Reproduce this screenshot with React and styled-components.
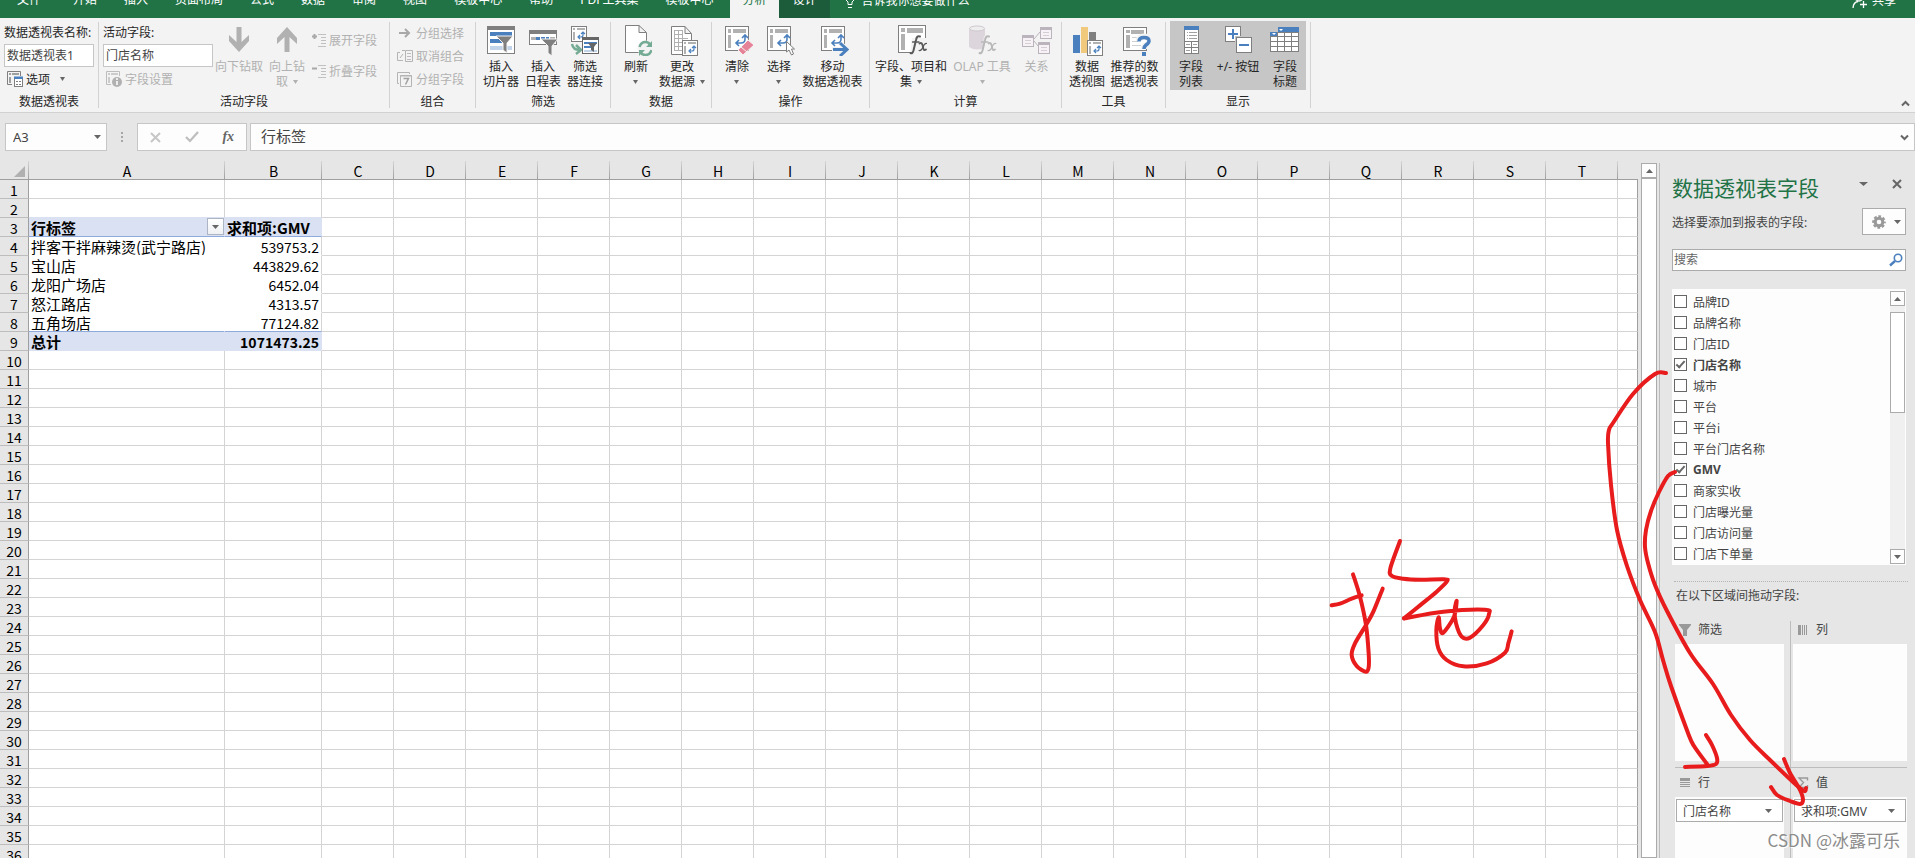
import React from "react";
import styled, { createGlobalStyle, css } from "styled-components";

const GREEN = "#217346";
const GREY = "#7f7f7f";
const BLUE = "#4a80bd";
const UI = `"Noto Sans", "Noto Sans CJK SC", sans-serif`;
const CELL = `"Noto Sans CJK SC", "Noto Sans", sans-serif`;

const Global = createGlobalStyle`
  *, *::before, *::after { box-sizing: border-box; }
  body { margin: 0; font-family: ${UI}; font-size: 12px; color: #262626; background: #e6e6e6; }
  button, input { font: inherit; color: inherit; margin: 0; border-radius: 0; }
  button { background: none; border: 0; padding: 0; }
  svg { display: block; flex: none; }
`;

const Page = styled.div`
  position: relative;
  display: flex;
  flex-direction: column;
  height: 100vh;
  overflow: hidden;
`;

/* ---------- tab strip ---------- */

const TabStrip = styled.nav`
  display: flex;
  align-items: flex-end;
  flex: none;
  height: 18px;
  overflow: hidden;
  background: ${GREEN};
  color: #fff;
`;

const Tab = styled.button`
  flex: none;
  height: 36px;
  padding: 0 14px 0 13px;
  line-height: 18px;
  white-space: nowrap;
  ${(p) => p.$kind === "file" && css`padding: 0 19px 0 17px;`}
  ${(p) => p.$kind === "active" && css`margin-left: 3px; padding: 0 13px 0 12px; background: #f3f3f3; color: ${GREEN};`}
  ${(p) => p.$kind === "context" && css`background: #1c5c3b;`}
`;

const TellMe = styled.button`
  display: flex;
  align-items: center;
  gap: 5px;
  height: 36px;
  margin-left: 14px;
  white-space: nowrap;
`;

const Share = styled(TellMe)`
  margin-left: auto;
  margin-right: 19px;
`;

/* ---------- ribbon ---------- */

const Ribbon = styled.div`
  display: flex;
  flex: none;
  height: 95px;
  background: #f3f3f3;
  border-bottom: 1px solid #d2d2d2;
`;

const Group = styled.section`
  display: flex;
  flex-direction: column;
  flex: none;
  padding: 3px 4px 0;
`;

const GroupBody = styled.div`
  display: flex;
  height: 69px;
  background: ${(p) => (p.$pressed ? "#c6c6c6" : "none")};
`;

const GroupTitle = styled.h2`
  margin: 2px 0 0;
  font-size: 12px;
  font-weight: 400;
  line-height: 20px;
  text-align: center;
`;

const Divider = styled.div`
  flex: none;
  width: 1px;
  margin: 4px 0;
  background: #d2d2d2;
`;

const BigButton = styled.button`
  display: flex;
  flex-direction: column;
  align-items: center;
  gap: 3px;
  width: ${(p) => p.$w || 42}px;
  padding: 3px 0 0;
  line-height: 15px;
  white-space: nowrap;
  color: ${(p) => (p.disabled ? "#b1b1b1" : "#262626")};
`;

const Line = styled.span`
  display: flex;
  align-items: center;
  justify-content: center;
  gap: 5px;
  height: 15px;
`;

const Stack = styled.div`
  display: flex;
  flex-direction: column;
  width: ${(p) => p.$w}px;
  padding-top: ${(p) => p.$top || 0}px;
  gap: ${(p) => p.$gap || 0}px;
`;

const FieldLabel = styled.label`
  padding-top: 2px;
  line-height: 18px;
  white-space: nowrap;
`;

const TextBox = styled.input`
  width: 100%;
  height: 23px;
  margin: 2px 0;
  padding: 0 2px;
  border: 1px solid #c6c6c6;
  background: #fff;
  color: #444;
`;

const SmallButton = styled.button`
  display: flex;
  align-items: center;
  gap: 3px;
  height: ${(p) => p.$h || 22}px;
  padding-left: 3px;
  white-space: nowrap;
  color: ${(p) => (p.disabled ? "#b1b1b1" : "#262626")};
`;

const MenuMark = styled.span`
  padding-left: 7px;
`;

const Collapse = styled.button`
  align-self: flex-end;
  margin: 0 5px 5px auto;
`;

/* ---------- formula bar ---------- */

const FormulaBar = styled.div`
  display: flex;
  flex: none;
  height: 48px;
  padding: 10px 0 10px 5px;
`;

const BarBox = styled.div`
  display: flex;
  align-items: center;
  width: ${(p) => (p.$w ? `${p.$w}px` : "auto")};
  flex: ${(p) => (p.$w ? "none" : "1")};
  min-width: 0;
  border: 1px solid #c6c6c6;
  background: #fdfdfd;
  padding: 0 5px;
`;

const BarInput = styled.input`
  flex: 1;
  min-width: 0;
  border: 0;
  background: none;
  padding: ${(p) => (p.$formula ? "0 0 3px 5px" : "0 0 0 2px")};
  font-family: ${(p) => (p.$formula ? CELL : UI)};
  font-size: ${(p) => (p.$formula ? 15 : 13)}px;
  line-height: 20px;
  color: #444;
`;

const Dots = styled.div`
  display: flex;
  flex-direction: column;
  align-items: center;
  justify-content: center;
  gap: 2px;
  width: 30px;
  &::before, &::after, span { content: ""; width: 2px; height: 2px; background: #a6a6a6; }
`;

const BarButtons = styled(BarBox)`
  justify-content: space-around;
  padding: 0;
  margin-right: 3px;
`;

const FxButton = styled.button`
  font: italic bold 14px "Liberation Serif", serif;
  color: #666;
`;

/* ---------- worksheet ---------- */

const Workspace = styled.main`
  display: flex;
  flex: 1;
  min-height: 0;
`;

const SheetArea = styled.div`
  flex: 1;
  min-width: 0;
  overflow: hidden;
`;

const Grid = styled.table`
  width: 100%;
  table-layout: fixed;
  border-collapse: separate;
  border-spacing: 0;
  font-family: ${CELL};
  color: #000;
`;

const ColHead = styled.th`
  height: 19px;
  padding: 3px 0 0;
  border-bottom: 1px solid #9f9f9f;
  background: linear-gradient(#d4d4d4, #9f9f9f) right / 1px 100% no-repeat;
  font-size: 14px;
  font-weight: 400;
  line-height: 15px;
  &:last-child { background: none; }
`;

const Corner = styled(ColHead)`
  svg { margin: 0 4px 0 auto; }
`;

const RowHead = styled.th`
  height: 19px;
  padding: 2px 0 0;
  border-right: 1px solid #9f9f9f;
  border-bottom: 1px solid #bdbdbd;
  background: #e6e6e6;
  font-size: 14px;
  font-weight: 400;
  line-height: 16px;
`;

const Cell = styled.td`
  height: 19px;
  padding: ${(p) => (p.$flush ? 0 : 2)}px 2px 0;
  overflow: hidden;
  background: ${(p) => (p.$fill ? "#d9e1f2" : "#fff")};
  border-right: 1px solid ${(p) => p.$right || "#d4d4d4"};
  border-bottom: 1px solid ${(p) => p.$bottom || "#d4d4d4"};
  font-size: ${(p) => (p.$num ? 14 : 15)}px;
  font-weight: ${(p) => (p.$bold ? 700 : 400)};
  line-height: 16px;
  white-space: nowrap;
  text-align: ${(p) => (p.$num ? "right" : "left")};
  &:last-child { border-right-color: #9f9f9f; }
`;

const CellLine = styled.div`
  display: flex;
  align-items: flex-start;
  justify-content: space-between;
  height: 18px;
  margin-right: -2px;
  span { padding-top: 2px; }
`;

const FilterButton = styled.button`
  display: grid;
  place-items: center;
  width: 17px;
  height: 17px;
  border: 1px solid #adb5c4;
  background: linear-gradient(#fff, #eef0f4);
`;

const SheetScroll = styled.div`
  display: flex;
  flex-direction: column;
  flex: none;
  width: 16px;
  margin: 2px 2px 0 3px;
`;

const ScrollButton = styled.button`
  display: grid;
  place-items: center;
  width: 15px;
  height: 15px;
  border: 1px solid #ababab;
  background: #fdfdfd;
  ${(p) => p.$wide && css`width: 16px;`}
`;

const ScrollThumb = styled.div`
  flex: ${(p) => (p.$h ? "none" : "1")};
  height: ${(p) => (p.$h ? `${p.$h}px` : "auto")};
  margin-top: ${(p) => (p.$h ? 6 : 0)}px;
  border: 1px solid #ababab;
  background: #fff;
`;

/* ---------- field pane ---------- */

const Pane = styled.aside`
  display: flex;
  flex-direction: column;
  flex: none;
  width: 256px;
  margin-top: 2px;
  padding: 8px 9px 0 12px;
  border-left: 1px solid #bdbdbd;
  color: #444;
  overflow: hidden;
  > * { flex-shrink: 0; }
`;

const PaneHead = styled.header`
  display: flex;
  align-items: flex-start;
  height: 34px;
  margin-right: -8px;
`;

const PaneTitle = styled.h1`
  margin: 0 auto 0 0;
  font-size: 21px;
  font-weight: 400;
  line-height: 34px;
  color: ${GREEN};
`;

const PaneIcon = styled.button`
  display: grid;
  place-items: center;
  width: 34px;
  height: 26px;
`;

const PaneRow = styled.div`
  display: flex;
  align-items: center;
  justify-content: space-between;
  margin-top: 3px;
`;

const GearButton = styled.button`
  display: flex;
  align-items: center;
  justify-content: space-between;
  width: 44px;
  height: 27px;
  padding: 0 4px 0 9px;
  border: 1px solid #ababab;
  background: #fdfdfd;
`;

const Search = styled.div`
  display: flex;
  align-items: center;
  height: 22px;
  margin-top: 14px;
  padding-right: 2px;
  border: 1px solid #ababab;
  background: #fff;
  input { flex: 1; min-width: 0; height: 18px; border: 0; background: none; padding: 0 1px 2px; }
  input::placeholder { color: #666; opacity: 1; }
`;

const FieldBox = styled.div`
  display: flex;
  justify-content: space-between;
  margin-top: 18px;
  padding: 2px 1px 1px 2px;
  background: #fdfdfd;
`;

const FieldList = styled.ul`
  margin: 0;
  padding: 0;
  list-style: none;
`;

const FieldItem = styled.label`
  display: flex;
  align-items: center;
  gap: 6px;
  height: 21px;
  font-weight: ${(p) => (p.$bold ? 700 : 400)};
  white-space: nowrap;
`;

const Check = styled.input`
  appearance: none;
  display: grid;
  place-items: center;
  width: 13px;
  height: 13px;
  border: 1px solid #666;
  background: #fff;
  &:checked::after {
    content: "";
    width: 9px;
    height: 5px;
    margin-top: -3px;
    border: solid #666;
    border-width: 0 0 2px 2px;
    transform: rotate(-48deg);
  }
`;

const FieldScroll = styled.div`
  display: flex;
  flex-direction: column;
  width: 15px;
  background: #f0f0f0;
  button:last-child { margin-top: auto; }
`;

const DragHint = styled.p`
  margin: 16px -2px 0 2px;
  padding: 5px 2px 17px;
  border-top: 1px dotted #b5b5b5;
  line-height: 17px;
`;

const AreaRow = styled.div`
  display: flex;
  flex: ${(p) => (p.$last ? "1 0 0" : "none")};
  margin: 0 -1px 0 3px;
  border-top: ${(p) => (p.$last ? "1px solid #bdbdbd" : "0")};
`;

const Area = styled.section`
  display: flex;
  flex-direction: column;
  width: 50%;
  padding: ${(p) => (p.$last ? 6 : 0)}px 0 ${(p) => (p.$last ? 0 : 6)}px 2px;
  &:first-child { padding-left: 0; padding-right: 6px; border-right: 1px solid #bdbdbd; }
`;

const AreaTitle = styled.h3`
  display: flex;
  align-items: center;
  gap: 7px;
  margin: 0 0 5px;
  padding-left: 4px;
  font-size: 12px;
  font-weight: 400;
  line-height: 18px;
`;

const AreaBox = styled.div`
  flex: 1;
  min-height: ${(p) => (p.$last ? 0 : 117)}px;
  padding: 2px 1px;
  background: #fdfdfd;
`;

const AreaItem = styled.button`
  display: flex;
  align-items: center;
  justify-content: space-between;
  width: 100%;
  height: 23px;
  padding: 0 10px 0 6px;
  border: 1px solid #ababab;
  background: #fff;
`;

/* ---------- overlays ---------- */

const Ink = styled.svg`
  position: absolute;
  top: 0;
  right: 0;
  pointer-events: none;
  fill: none;
  stroke: #e81c1c;
  stroke-width: 4;
  stroke-linecap: round;
  stroke-linejoin: round;
  path { vector-effect: non-scaling-stroke; }
`;

const Watermark = styled.div`
  position: absolute;
  right: 15px;
  bottom: 5px;
  font: 17px/26px "Noto Sans CJK SC", sans-serif;
  color: #8c8c8c;
  text-shadow: 1px 1px 0 #fff;
`;

/* ---------- icons ---------- */

const Caret = ({ up, w = 7, color = "#666" }) => (
  <svg width={w} height="4" viewBox="0 0 8 4" preserveAspectRatio="none" aria-hidden="true">
    <path d={up ? "M0 4L4 0L8 4Z" : "M0 0H8L4 4Z"} fill={color} />
  </svg>
);

const Icon = ({ w = 32, h = w, children }) => (
  <svg width={w} height={h} viewBox={`0 0 ${w} ${h}`} fill="none" aria-hidden="true">
    {children}
  </svg>
);

const Turn = ({ s = 1.6 }) => (
  <path
    d="M20 9V13Q20 17 16 17H11M17 12L20 9L23 12M14 14L11 17L14 20"
    stroke={BLUE}
    strokeWidth={s}
  />
);

const Pivot = ({ x = 4, y = 2 }) => (
  <g transform={`translate(${x} ${y})`}>
    <rect x=".5" y=".5" width="23" height="24" fill="#fff" stroke={GREY} />
    <path d="M3 3H6V7H3ZM8 3H21V7H8ZM3 9H6V22H3Z" fill="#b1b1b1" />
    <Turn />
  </g>
);

const MiniPivot = ({ x, y }) => (
  <g transform={`translate(${x} ${y})`}>
    <rect x=".5" y=".5" width="15" height="15" fill="#fff" stroke={GREY} />
    <path d="M2 2H4V4H2ZM6 2H14V4H6ZM2 6H4V14H2Z" fill="#b1b1b1" />
    <path d="M12 6.500V9Q12 11 10 11H7M10 8L12 6L14 8M9 9L7 11L9 13" stroke={BLUE} strokeWidth="1.200" />
  </g>
);

const Funnel = ({ x, y }) => (
  <path
    transform={`translate(${x} ${y})`}
    d="M0 0H17L11 7V17L7 14V7Z"
    fill={GREY}
    stroke="#f3f3f3"
  />
);

const Fx = ({ x, y, color = "#595959" }) => (
  <g transform={`translate(${x} ${y})`} stroke={color} strokeLinecap="round">
    <path d="M10 1.500Q7 0 6 5L3.500 15.500Q2.500 19 .5 18" strokeWidth="2" />
    <path d="M2.500 7H9" strokeWidth="1.300" />
    <path d="M9.500 8.500Q11.500 7 12.500 10L13.500 14Q14 16 16 14.500" strokeWidth="1.800" />
    <path d="M17 8.500Q14.500 8 13 12Q11.500 16 9 15.500" strokeWidth="1.200" />
  </g>
);

const SlicerIcon = () => (
  <Icon>
    <rect x="2.500" y="2.500" width="27" height="27" fill="#fff" stroke={GREY} />
    <path d="M2 2H30V6H2Z" fill={GREY} />
    <path d="M5 10H27M5 17H20" stroke={BLUE} strokeWidth="4" />
    <path d="M5 24H27" stroke="#c1d4e9" strokeWidth="4" />
    <Funnel x={11} y={12} />
  </Icon>
);

const TimelineIcon = () => (
  <Icon>
    <rect x="2.500" y="6.500" width="27" height="14" fill="#fff" stroke={GREY} />
    <path d="M2 6H30V10H2Z" fill={GREY} />
    <path d="M4 14.500H9M23 14.500H28" stroke="#b1b1b1" strokeWidth="3" />
    <path d="M9 14.500H13M14 14.500H18M19 14.500H22" stroke={BLUE} strokeWidth="3" />
    <Funnel x={14} y={15} />
  </Icon>
);

const ConnectIcon = () => (
  <Icon>
    <MiniPivot x={2} y={2} />
    <path d="M3 20Q4 26 11 26M7 21L12 26L7 30" stroke="#74ab94" strokeWidth="2.500" />
    <rect x="13.500" y="13.500" width="16" height="16" fill="#fff" stroke="#666" />
    <path d="M13 13H30V16H13Z" fill="#666" />
    <path d="M15 19H28M15 23H22" stroke={BLUE} strokeWidth="2" />
    <path d="M15 27H28" stroke="#c1d4e9" strokeWidth="2" />
    <path d="M19 19H28L25 23V28L22 26V23Z" fill="#666" />
  </Icon>
);

const RefreshIcon = () => (
  <Icon>
    <path d="M5.500 1.500H19L26.500 8.500V28.500H5.500ZM19 1.500V8.500H26" fill="#fff" stroke={GREY} />
    <circle cx="25.500" cy="24.500" r="8" fill="#f3f3f3" />
    <path d="M19.500 23Q21 18 25.500 18Q28.500 18 30 20.500M31.500 26Q30 31 25.500 31Q22 31 21 28.500" stroke="#74ab94" strokeWidth="2.500" />
    <path d="M32 17V23H26ZM19 32V26H25Z" fill="#74ab94" />
  </Icon>
);

const SourceIcon = () => (
  <Icon>
    <path d="M5.500 2.500H19L25.500 9.500V30.500H5.500ZM19 2.500V9.500H25" fill="#fff" stroke={GREY} />
    <path d="M8.500 7V26M12.500 7V26M16.500 7V26M8 6.500H17M8 10.500H17M8 14.500H22M8 18.500H20M8 22.500H20M8 26.500H20" stroke="#b1b1b1" />
    <MiniPivot x={16} y={16} />
  </Icon>
);

const ClearIcon = () => (
  <Icon>
    <Pivot />
    <path d="M17 26L27 16L33 21L22 31Z" fill="#e78399" stroke="#f3f3f3" />
    <path d="M20 23L26 28" stroke="#f3f3f3" />
  </Icon>
);

const SelectIcon = () => (
  <Icon>
    <Pivot />
    <path d="M23.500 17.500V28L26 26L28.500 31L30.500 30L28.500 25H31.500Z" fill="#fff" stroke={GREY} />
  </Icon>
);

const MoveIcon = () => (
  <Icon>
    <Pivot />
    <path d="M15 25.500H29M23 19L30 25.500L23 32" stroke="#f3f3f3" strokeWidth="5" />
    <path d="M16 25.500H29M23 19L30 25.500L23 32" stroke={BLUE} strokeWidth="3" />
  </Icon>
);

const FieldsFxIcon = () => (
  <Icon>
    <rect x="3.500" y="1.500" width="27" height="27" fill="#fff" stroke={GREY} />
    <path d="M6 4H10V8H6ZM12 4H28V9H12ZM6 10H10V26H6Z" fill="#b1b1b1" />
    <path d="M17 14H32V31H15Z" fill="#f3f3f3" />
    <Fx x={15} y={11} />
  </Icon>
);

const OlapIcon = () => (
  <Icon>
    <path d="M3 4V23Q11 28 19 23V4Z" fill="#dcd6dc" />
    <ellipse cx="11" cy="4.500" rx="7.500" ry="2.500" fill="#eee" stroke="#cfc8cf" />
    <path d="M18 12H30V28H16Z" fill="#f3f3f3" />
    <Fx x={13} y={11} color="#b8b8b8" />
  </Icon>
);

const RelationIcon = () => (
  <Icon>
    <g stroke="#bcb4bc" fill="#f6f2f6">
      <path d="M13 15L19 8M13 17L18 23" />
      <rect x="1.500" y="11.500" width="11" height="11" />
      <rect x="19.500" y="3.500" width="11" height="11" />
      <rect x="17.500" y="18.500" width="11" height="11" />
      <path d="M2 13H12M20 5H30M18 20H28" strokeWidth="2" />
      <path d="M4 16.500H10M4 19.500H10M22 8.500H28M22 11.500H28M20 23.500H26M20 26.500H26" stroke="#d5cfd5" />
    </g>
  </Icon>
);

const ChartIcon = () => (
  <Icon>
    <path d="M2 11H9V29H2Z" fill={BLUE} />
    <path d="M10 3H17V29H10Z" fill="#f0c97d" />
    <path d="M18 8H25V16H18Z" fill={GREY} />
    <MiniPivot x={16} y={16} />
  </Icon>
);

const RecommendIcon = () => (
  <Icon>
    <rect x="4.500" y="3.500" width="23" height="23" fill="#fff" stroke={GREY} />
    <path d="M7 6H11V9H7ZM12 6H25V10H12ZM7 11H11V24H7Z" fill="#b1b1b1" />
    <path d="M13 13.500H20M13 17.500H19M13 21.500H22" stroke="#d0d0d0" />
    <path d="M20 17Q20 12.500 25 12.500Q30 12.500 30 16.500Q30 19 27 21Q25 22.500 25 25" stroke="#f3f3f3" strokeWidth="6" />
    <path d="M20 17.500Q20 13.500 25 13.500Q30 13.500 30 17Q30 19 27 21Q25 22.500 25 25" stroke={BLUE} strokeWidth="3.500" />
    <path d="M23 28H27V32H23Z" fill={BLUE} />
  </Icon>
);

const FieldListIcon = () => (
  <Icon>
    <rect x="9.500" y="2.500" width="14" height="27" fill="#fff" stroke={GREY} />
    <path d="M9 2H24V6H9Z" fill={BLUE} />
    <path d="M10 17.500H23M10 23.500H23M16.500 17V29" stroke={GREY} />
    <path d="M12 8.500H13M14 8.500H22M12 11.500H13M14 11.500H22M12 14.500H13M14 14.500H22M11 20.500H15M18 20.500H22M11 26.500H15M18 26.500H22" stroke="#a0a0a0" />
  </Icon>
);

const PlusMinusIcon = () => (
  <Icon>
    <rect x="3.500" y="2.500" width="15" height="15" fill="#fff" stroke={GREY} />
    <path d="M11 5V15M6 10H16" stroke={BLUE} strokeWidth="2" />
    <rect x="13" y="12" width="18" height="19" fill="#c6c6c6" />
    <rect x="14.500" y="13.500" width="15" height="15" fill="#fff" stroke={GREY} />
    <path d="M17 21H27" stroke={BLUE} strokeWidth="2" />
  </Icon>
);

const HeadersIcon = () => (
  <Icon>
    <path d="M1 8H9V3H30V28H1Z" fill={GREY} />
    <path d="M1 8H9V3H30V8H8V12H1Z" fill={BLUE} />
    <path d="M2 13H8V17H2ZM9 9H15V12H9ZM16 9H22V12H16ZM23 9H29V12H23ZM9 13H15V17H9ZM16 13H22V17H16ZM23 13H29V17H23ZM2 18H8V22H2ZM9 18H15V22H9ZM16 18H22V22H16ZM23 18H29V22H23ZM2 23H8V27H2ZM9 23H15V27H9ZM16 23H22V27H16ZM23 23H29V27H23Z" fill="#fff" />
    <path d="M10 5H14L12 7ZM3 9H7L5 11Z" fill="#fff" />
  </Icon>
);

const DrillIcon = ({ up }) => (
  <Icon>
    <g transform={up ? "matrix(1 0 0 -1 0 31)" : undefined}>
      <path d="M13.500 3H18.500V18L26 11V17L16 28L6 17V11L13.500 18Z" fill="#b1b1b1" />
    </g>
  </Icon>
);

const DrillUpIcon = () => <DrillIcon up />;

const OptionsIcon = ({ info }) => (
  <Icon w={16}>
    <path d="M.5 .5H13.500V5M5 13.500H.5V.5" stroke={info ? "#bdbdbd" : GREY} />
    <path d="M2 2H4V4H2ZM5 2H12V4H5ZM2 6H4V12H2Z" fill={info ? "#ccc" : "#a0a0a0"} />
    {info ? (
      <>
        <circle cx="11" cy="11" r="5" fill="#b1b1b1" />
        <path d="M11 7V9M11 10V14" stroke="#fff" strokeWidth="1.500" />
      </>
    ) : (
      <>
        <rect x="7.500" y="6.500" width="8" height="9" fill="#fff" stroke={GREY} />
        <path d="M7 5.500H16V8H7Z" fill={BLUE} />
        <path d="M9 10.500H11M12 10.500H14M9 13.500H11M12 13.500H14" stroke={GREY} />
      </>
    )}
  </Icon>
);

const ExpandIcon = ({ minus }) => (
  <Icon w={14}>
    <path d={minus ? "M0 4.500H5" : "M0 3.500H5M2.500 1V6"} stroke="#a8a8a8" strokeWidth="2" />
    <path d="M6 1.500H14M9 4.500H14M9 7.500H14M9 10.500H14M6 13.500H14" stroke="#c0c0c0" />
  </Icon>
);

const GroupArrowIcon = () => (
  <Icon w={16}>
    <path d="M2 8H12M8 4L12 8L8 12" stroke="#a8a8a8" strokeWidth="2" />
  </Icon>
);

const UngroupIcon = () => (
  <Icon w={16}>
    <path d="M3 4.500H.5V12.500H6M8.500 2.500H15.500V13.500H8.500ZM3 10L6 6M5 2.500H8" stroke="#b4b4b4" />
    <path d="M10 5.500H14M10 8.500H14M10 11.500H14" stroke="#c0b8c0" />
  </Icon>
);

const GroupFieldIcon = () => (
  <Icon w={16}>
    <path d="M2 12.500H.5V1.500H12.500V3" stroke="#b4b4b4" />
    <path d="M3.500 4.500H14.500V15.500H3.500ZM3 5H15" stroke="#b4b4b4" />
    <path d="M6.500 7.500H11.500L8.500 13.500" stroke="#a0a0a0" strokeWidth="1.500" />
  </Icon>
);

const BulbIcon = () => (
  <Icon w={12} h={20}>
    <path d="M4 14.500V12Q1 10 1 7Q1 2 6 2Q11 2 11 7Q11 10 8 12V14.500ZM4 17.500H8" stroke="#fff" />
  </Icon>
);

const ShareIcon = () => (
  <Icon w={15} h={20}>
    <circle cx="7" cy="7" r="4" stroke="#fff" strokeWidth="1.300" />
    <path d="M1 18Q1.500 12 6 11.500M11.500 11V18M8 14.500H15" stroke="#fff" strokeWidth="1.300" />
  </Icon>
);

const GearIcon = () => (
  <Icon w={14}>
    <circle cx="7" cy="7" r="3.800" stroke="#999" strokeWidth="3" />
    <circle cx="7" cy="7" r="5.800" stroke="#999" strokeWidth="2" strokeDasharray="2.800 1.755" strokeDashoffset="1.400" />
  </Icon>
);

const SearchIcon = () => (
  <Icon w={14}>
    <circle cx="9" cy="5" r="3.700" stroke={BLUE} strokeWidth="1.600" />
    <path d="M6 8L1 12.500" stroke={BLUE} strokeWidth="2.400" />
  </Icon>
);

const CrossIcon = ({ color = "#666", w = 10 }) => (
  <Icon w={w}>
    <path d={`M1 1L${w - 1} ${w - 1}M${w - 1} 1L1 ${w - 1}`} stroke={color} strokeWidth="2" />
  </Icon>
);

const TickIcon = () => (
  <Icon w={14} h={12}>
    <path d="M1 6L5 10L13 1" stroke="#bdbdbd" strokeWidth="2.200" />
  </Icon>
);

const Chevron = ({ up }) => (
  <Icon w={9} h={7}>
    <path d={up ? "M1 5.500L4.500 2L8 5.500" : "M1 1.500L4.500 5L8 1.500"} stroke="#666" strokeWidth="2" />
  </Icon>
);

const AreaIcon = ({ kind }) => (
  <Icon w={12}>
    {kind === "filter" && <path d="M0 0H12V1L8 6V12H4V6L0 1Z" fill="#999" />}
    {kind === "col" && <path d="M1 1H4V11H1ZM5 1H6V11H5ZM7 1H8V11H7ZM9 1H10V11H9Z" fill="#999" />}
    {kind === "row" && <path d="M1 1H11V4H1ZM1 5H11V6H1ZM1 7H11V8H1ZM1 9H11V10H1Z" fill="#999" />}
    {kind === "sum" && <path d="M10.500 3.500V1H2L6.500 5.500L2 10.500H10.500V8" stroke="#999" strokeWidth="1.400" />}
  </Icon>
);

/* ---------- data ---------- */

const TABS = ["开始", "插入", "页面布局", "公式", "数据", "审阅", "视图", "模板中心", "帮助", "PDF工具集", "模板中心"];

const GROUPS = [
  { title: "筛选", items: [
    { icon: SlicerIcon, lines: ["插入", "切片器"] },
    { icon: TimelineIcon, lines: ["插入", "日程表"] },
    { icon: ConnectIcon, lines: ["筛选", "器连接"] },
  ] },
  { title: "数据", items: [
    { icon: RefreshIcon, lines: ["刷新", ""], caret: true },
    { icon: SourceIcon, lines: ["更改", "数据源"], caret: true, w: 50 },
  ] },
  { title: "操作", items: [
    { icon: ClearIcon, lines: ["清除", ""], caret: true },
    { icon: SelectIcon, lines: ["选择", ""], caret: true },
    { icon: MoveIcon, lines: ["移动", "数据透视表"], w: 65 },
  ] },
  { title: "计算", items: [
    { icon: FieldsFxIcon, lines: ["字段、项目和", "集"], caret: true, w: 74 },
    { icon: OlapIcon, lines: ["OLAP 工具", ""], caret: true, w: 68, off: true },
    { icon: RelationIcon, lines: ["关系"], w: 41, off: true },
  ] },
  { title: "工具", items: [
    { icon: ChartIcon, lines: ["数据", "透视图"] },
    { icon: RecommendIcon, lines: ["推荐的数", "据透视表"], w: 53 },
  ] },
  { title: "显示", pressed: true, items: [
    { icon: FieldListIcon, lines: ["字段", "列表"] },
    { icon: PlusMinusIcon, lines: ["+/- 按钮"], w: 52 },
    { icon: HeadersIcon, lines: ["字段", "标题"] },
  ] },
];

const COLUMNS = "ABCDEFGHIJKLMNOPQRST".split("");
const ROWS = Array.from({ length: 60 }, (_, i) => i + 1);

const PIVOT = {
  3: ["行标签", "求和项:GMV"],
  4: ["拌客干拌麻辣烫(武宁路店)", "539753.2"],
  5: ["宝山店", "443829.62"],
  6: ["龙阳广场店", "6452.04"],
  7: ["怒江路店", "4313.57"],
  8: ["五角场店", "77124.82"],
  9: ["总计", "1071473.25"],
};

const FIELDS = ["品牌ID", "品牌名称", "门店ID", "门店名称", "城市", "平台", "平台i", "平台门店名称", "GMV", "商家实收", "门店曝光量", "门店访问量", "门店下单量"];
const PICKED = ["门店名称", "GMV"];

/* Turns a list of points into a smooth pen stroke. */
const stroke = (pts) =>
  pts.reduce((d, p, i) => {
    if (i === 0) return `M${p[0]} ${p[1]}`;
    const a = pts[i - 2] || pts[i - 1];
    const b = pts[i - 1];
    const n = pts[i + 1] || p;
    const c1 = [b[0] + (p[0] - a[0]) / 6, b[1] + (p[1] - a[1]) / 6];
    const c2 = [p[0] - (n[0] - b[0]) / 6, p[1] - (n[1] - b[1]) / 6];
    return `${d}C${c1.join(" ")} ${c2.join(" ")} ${p.join(" ")}`;
  }, "");

const ARROWS = [
  [[1666, 373], [1655, 374], [1633, 394], [1613, 423], [1609, 430], [1608, 443], [1611, 485], [1617, 530], [1627, 566], [1640, 600], [1655, 632], [1663, 660], [1671, 686], [1688, 733], [1694, 746], [1707, 764]],
  [[1706, 735], [1712, 745], [1717, 758], [1716, 764], [1707, 766], [1685, 767]],
  [[1675, 472], [1668, 476], [1659, 492], [1651, 511], [1646, 530], [1645, 547], [1648, 563], [1655, 585], [1667, 611], [1690, 653], [1713, 684], [1731, 715], [1750, 740], [1770, 760], [1793, 782], [1804, 791], [1806, 788]],
  [[1784, 759], [1790, 773], [1800, 790], [1803, 800], [1800, 804], [1790, 801], [1777, 795], [1771, 787]],
];

const WORD = [
  [[65, 256], [90, 251], [125, 236], [155, 226]],
  [[129, 163], [150, 230], [168, 315], [176, 400], [176, 442], [167, 455], [140, 438], [125, 405], [135, 370], [168, 315], [190, 275], [218, 206]],
  [[270, 63], [241, 145], [246, 168], [280, 176], [330, 179], [402, 178], [411, 184], [380, 215], [330, 256], [282, 295]],
  [[282, 295], [400, 275], [525, 269], [537, 282], [520, 315], [480, 353], [455, 350], [438, 310], [434, 270], [440, 243], [432, 290], [400, 338], [390, 325], [386, 292], [379, 330], [385, 385], [410, 420], [460, 439], [530, 430], [585, 398], [595, 370], [605, 334]],
];

/* ---------- parts ---------- */

const RibbonGroup = ({ title, pressed, children }) => (
  <>
    <Group>
      <GroupBody $pressed={pressed}>{children}</GroupBody>
      <GroupTitle>{title}</GroupTitle>
    </Group>
    <Divider />
  </>
);

const Command = ({ icon: Glyph, lines, caret, w, off }) => (
  <BigButton $w={w} disabled={off}>
    <Glyph />
    <span>
      {lines.map((text, i) => (
        <Line key={i}>
          {text}
          {caret && i === lines.length - 1 && <Caret w={5} color={off ? "#b1b1b1" : "#666"} />}
        </Line>
      ))}
    </span>
  </BigButton>
);

const cellLook = (row, col) => {
  if (col > 1) return {};
  const fill = row === 3 || row === 9;
  const inside = row >= 3 && row <= 9;
  const base = fill ? "#d9e1f2" : "#fff";
  return {
    $fill: fill,
    $bold: fill,
    $num: col === 1 && row > 3,
    $flush: col === 0 && row === 3,
    $right: inside && (col === 0 || fill) ? base : undefined,
    $bottom: row === 2 || row === 9 ? "#d9e1f2" : row === 3 || row === 8 ? "#8ea9db" : inside ? base : undefined,
  };
};

const Sheet = () => (
  <SheetArea>
    <Grid>
      <colgroup>
        <col width="29" />
        <col width="196" />
        <col width="97" />
        {COLUMNS.slice(2).map((c) => <col key={c} width="72" />)}
        <col />
      </colgroup>
      <thead>
        <tr>
          <Corner aria-label="全选">
            <Icon w={11}><path d="M11 0V11H0Z" fill="#b1b1b1" /></Icon>
          </Corner>
          {COLUMNS.map((c) => <ColHead key={c}>{c}</ColHead>)}
          <ColHead />
        </tr>
      </thead>
      <tbody>
        {ROWS.map((r) => (
          <tr key={r}>
            <RowHead>{r}</RowHead>
            {[...COLUMNS, ""].map((c, i) => {
              const text = i < 2 && PIVOT[r] ? PIVOT[r][i] : null;
              return (
                <Cell key={i} {...cellLook(r, i)}>
                  {r === 3 && i === 0 ? (
                    <CellLine>
                      <span>{text}</span>
                      <FilterButton aria-label="筛选行标签"><Caret /></FilterButton>
                    </CellLine>
                  ) : text}
                </Cell>
              );
            })}
          </tr>
        ))}
      </tbody>
    </Grid>
  </SheetArea>
);

const DropArea = ({ kind, title, item, last }) => (
  <Area $last={last}>
    <AreaTitle><AreaIcon kind={kind} />{title}</AreaTitle>
    <AreaBox $last={last}>
      {item && <AreaItem>{item}<Caret /></AreaItem>}
    </AreaBox>
  </Area>
);

const FieldPane = () => (
  <Pane>
    <PaneHead>
      <PaneTitle>数据透视表字段</PaneTitle>
      <PaneIcon aria-label="任务窗格选项"><Caret w={9} /></PaneIcon>
      <PaneIcon aria-label="关闭"><CrossIcon /></PaneIcon>
    </PaneHead>
    <PaneRow>
      选择要添加到报表的字段:
      <GearButton aria-label="工具"><GearIcon /><Caret /></GearButton>
    </PaneRow>
    <Search>
      <input aria-label="搜索" placeholder="搜索" />
      <SearchIcon />
    </Search>
    <FieldBox>
      <FieldList>
        {FIELDS.map((f) => (
          <li key={f}>
            <FieldItem $bold={PICKED.includes(f)}>
              <Check type="checkbox" defaultChecked={PICKED.includes(f)} />
              {f}
            </FieldItem>
          </li>
        ))}
      </FieldList>
      <FieldScroll>
        <ScrollButton aria-label="向上滚动"><Caret up /></ScrollButton>
        <ScrollThumb $h={101} />
        <ScrollButton aria-label="向下滚动"><Caret /></ScrollButton>
      </FieldScroll>
    </FieldBox>
    <DragHint>在以下区域间拖动字段:</DragHint>
    <AreaRow>
      <DropArea kind="filter" title="筛选" />
      <DropArea kind="col" title="列" />
    </AreaRow>
    <AreaRow $last>
      <DropArea last kind="row" title="行" item="门店名称" />
      <DropArea last kind="sum" title="值" item="求和项:GMV" />
    </AreaRow>
  </Pane>
);

export default function App() {
  return (
    <Page>
      <Global />
      <TabStrip>
        <Tab $kind="file">文件</Tab>
        {TABS.map((t, i) => <Tab key={i}>{t}</Tab>)}
        <Tab $kind="active">分析</Tab>
        <Tab $kind="context">设计</Tab>
        <TellMe><BulbIcon />告诉我你想要做什么</TellMe>
        <Share><ShareIcon />共享</Share>
      </TabStrip>

      <Ribbon>
        <RibbonGroup title="数据透视表">
          <Stack $w={90} $top={1}>
            <FieldLabel htmlFor="pivot-name">数据透视表名称:</FieldLabel>
            <TextBox id="pivot-name" defaultValue="数据透视表1" />
            <SmallButton><OptionsIcon />选项<MenuMark><Caret w={5} /></MenuMark></SmallButton>
          </Stack>
        </RibbonGroup>
        <RibbonGroup title="活动字段">
          <Stack $w={110} $top={1}>
            <FieldLabel htmlFor="active-field">活动字段:</FieldLabel>
            <TextBox id="active-field" defaultValue="门店名称" />
            <SmallButton disabled><OptionsIcon info />字段设置</SmallButton>
          </Stack>
          <Command w={52} off icon={DrillIcon} lines={["向下钻取"]} />
          <Command w={44} off caret icon={DrillUpIcon} lines={["向上钻", "取"]} />
          <Stack $w={76} $top={8} $gap={9}>
            <SmallButton disabled><ExpandIcon />展开字段</SmallButton>
            <SmallButton disabled><ExpandIcon minus />折叠字段</SmallButton>
          </Stack>
        </RibbonGroup>
        <RibbonGroup title="组合">
          <Stack $w={77}>
            <SmallButton $h={23} disabled><GroupArrowIcon />分组选择</SmallButton>
            <SmallButton $h={23} disabled><UngroupIcon />取消组合</SmallButton>
            <SmallButton $h={23} disabled><GroupFieldIcon />分组字段</SmallButton>
          </Stack>
        </RibbonGroup>
        {GROUPS.map((g) => (
          <RibbonGroup key={g.title} title={g.title} pressed={g.pressed}>
            {g.items.map((c, i) => <Command key={i} {...c} />)}
          </RibbonGroup>
        ))}
        <Collapse aria-label="折叠功能区"><Chevron up /></Collapse>
      </Ribbon>

      <FormulaBar>
        <BarBox $w={102}>
          <BarInput aria-label="名称框" defaultValue="A3" />
          <Caret />
        </BarBox>
        <Dots><span /></Dots>
        <BarButtons $w={110}>
          <button aria-label="取消"><CrossIcon w={11} color="#c6c6c6" /></button>
          <button aria-label="输入"><TickIcon /></button>
          <FxButton aria-label="插入函数">fx</FxButton>
        </BarButtons>
        <BarBox>
          <BarInput $formula aria-label="编辑栏" defaultValue="行标签" />
          <Chevron />
        </BarBox>
      </FormulaBar>

      <Workspace>
        <Sheet />
        <SheetScroll>
          <ScrollButton $wide aria-label="向上滚动"><Caret up /></ScrollButton>
          <ScrollThumb />
        </SheetScroll>
        <FieldPane />
      </Workspace>

      <Ink width="620" height="858" viewBox="1295 0 620 858" aria-hidden="true">
        {ARROWS.map((p, i) => <path key={i} d={stroke(p)} />)}
        <g transform="translate(1310 520) scale(.33333)">
          {WORD.map((p, i) => <path key={i} d={stroke(p)} />)}
        </g>
      </Ink>
      <Watermark>CSDN @冰露可乐</Watermark>
    </Page>
  );
}
